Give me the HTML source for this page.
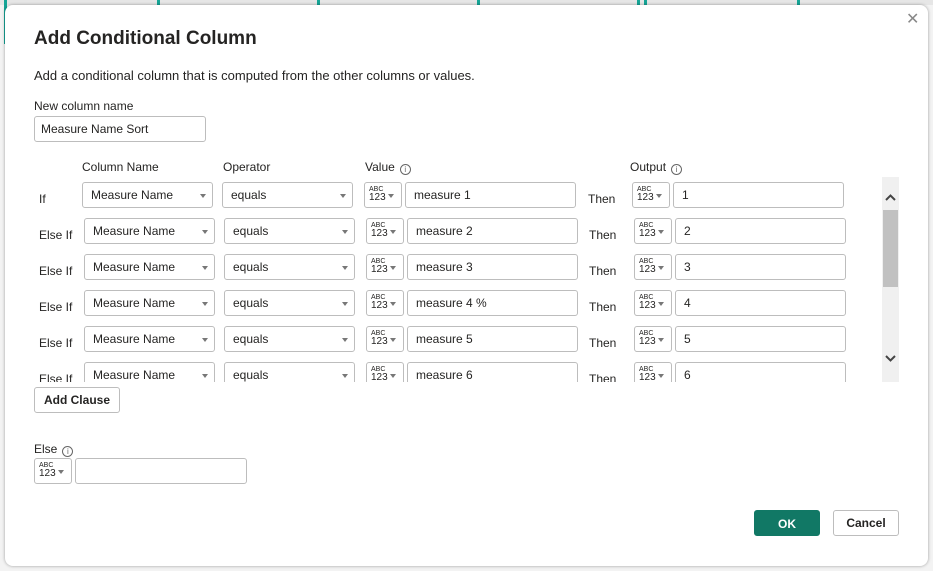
<!DOCTYPE html>
<html><head><style>
*{box-sizing:border-box}
body{margin:0;width:933px;height:571px;overflow:hidden;background:#f3f3f3;font-family:"Segoe UI","Liberation Sans",sans-serif;color:#252423;position:relative}
.a{position:absolute}
.dlg{left:5px;top:5px;width:923px;height:561px;background:#fff;border-radius:8px;box-shadow:0 0 3px rgba(0,0,0,.35)}
.box{position:absolute;border:1px solid #bdbdbd;border-radius:3px;background:#fff;font-size:12px;padding-left:8px;line-height:25px;height:26px}
.dd::after{content:"";position:absolute;right:6px;top:11px;border:3px solid transparent;border-top:4px solid #777}
.ty{position:absolute;border:1px solid #bdbdbd;border-radius:3px;width:38px;height:26px;background:#fff}
.ty b{position:absolute;left:4px;top:3px;font-weight:normal;font-size:7px;line-height:7px}
.ty i{position:absolute;left:4px;top:10px;font-style:normal;font-size:10px;line-height:10px}
.ty::after{content:"";position:absolute;right:7px;top:11px;border:3px solid transparent;border-top:4px solid #777}
.lbl{position:absolute;font-size:12px}
.info{display:inline-block;width:11px;height:11px;border:1px solid #666;border-radius:50%;font-size:8px;line-height:9px;text-align:center;margin-left:5px;vertical-align:-1px;color:#666}
.btn{position:absolute;border:1px solid #bdbdbd;border-radius:3px;background:#fff;font-size:12px;font-weight:bold;text-align:center}
</style></head><body>
<div class="a" style="left:0;top:0;width:933px;height:5px;background:#e6e6e6"></div>
<div class="a" style="left:4px;top:0;width:3px;height:44px;background:#16a596"></div>
<div class="a" style="left:157px;top:0;width:3px;height:6px;background:#16a596"></div>
<div class="a" style="left:317px;top:0;width:3px;height:6px;background:#16a596"></div>
<div class="a" style="left:477px;top:0;width:3px;height:6px;background:#16a596"></div>
<div class="a" style="left:637px;top:0;width:3px;height:6px;background:#16a596"></div>
<div class="a" style="left:644px;top:0;width:3px;height:6px;background:#16a596"></div>
<div class="a" style="left:797px;top:0;width:3px;height:6px;background:#16a596"></div>
<div class="a dlg">
</div>
<div class="a" style="left:34px;top:28px;font-size:19px;font-weight:bold;color:#252423">Add Conditional Column</div>
<div class="a" style="left:906px;top:9px;font-size:16px;color:#888">✕</div>
<div class="lbl" style="left:34px;top:68px;font-size:13px">Add a conditional column that is computed from the other columns or values.</div>
<div class="lbl" style="left:34px;top:99px">New column name</div>
<div class="box" style="left:34px;top:116px;width:172px;height:26px;padding-left:6px">Measure Name Sort</div>
<div class="lbl" style="left:82px;top:160px">Column Name</div>
<div class="lbl" style="left:223px;top:160px">Operator</div>
<div class="lbl" style="left:365px;top:160px">Value<span class="info">i</span></div>
<div class="lbl" style="left:630px;top:160px">Output<span class="info">i</span></div>
<div class="a" style="left:20px;top:176px;width:860px;height:206px;overflow:hidden">
<div class="lbl" style="left:19px;top:16px">If</div>
<div class="box dd" style="left:62px;top:6px;width:131px">Measure Name</div>
<div class="box dd" style="left:202px;top:6px;width:131px">equals</div>
<div class="ty" style="left:344px;top:6px"><b>ABC</b><i>123</i></div>
<div class="box" style="left:385px;top:6px;width:171px">measure 1</div>
<div class="lbl" style="left:568px;top:16px">Then</div>
<div class="ty" style="left:612px;top:6px"><b>ABC</b><i>123</i></div>
<div class="box" style="left:653px;top:6px;width:171px">1</div>

<div class="lbl" style="left:19px;top:52px">Else If</div>
<div class="box dd" style="left:64px;top:42px;width:131px">Measure Name</div>
<div class="box dd" style="left:204px;top:42px;width:131px">equals</div>
<div class="ty" style="left:346px;top:42px"><b>ABC</b><i>123</i></div>
<div class="box" style="left:387px;top:42px;width:171px">measure 2</div>
<div class="lbl" style="left:569px;top:52px">Then</div>
<div class="ty" style="left:614px;top:42px"><b>ABC</b><i>123</i></div>
<div class="box" style="left:655px;top:42px;width:171px">2</div>

<div class="lbl" style="left:19px;top:88px">Else If</div>
<div class="box dd" style="left:64px;top:78px;width:131px">Measure Name</div>
<div class="box dd" style="left:204px;top:78px;width:131px">equals</div>
<div class="ty" style="left:346px;top:78px"><b>ABC</b><i>123</i></div>
<div class="box" style="left:387px;top:78px;width:171px">measure 3</div>
<div class="lbl" style="left:569px;top:88px">Then</div>
<div class="ty" style="left:614px;top:78px"><b>ABC</b><i>123</i></div>
<div class="box" style="left:655px;top:78px;width:171px">3</div>

<div class="lbl" style="left:19px;top:124px">Else If</div>
<div class="box dd" style="left:64px;top:114px;width:131px">Measure Name</div>
<div class="box dd" style="left:204px;top:114px;width:131px">equals</div>
<div class="ty" style="left:346px;top:114px"><b>ABC</b><i>123</i></div>
<div class="box" style="left:387px;top:114px;width:171px">measure 4 %</div>
<div class="lbl" style="left:569px;top:124px">Then</div>
<div class="ty" style="left:614px;top:114px"><b>ABC</b><i>123</i></div>
<div class="box" style="left:655px;top:114px;width:171px">4</div>

<div class="lbl" style="left:19px;top:160px">Else If</div>
<div class="box dd" style="left:64px;top:150px;width:131px">Measure Name</div>
<div class="box dd" style="left:204px;top:150px;width:131px">equals</div>
<div class="ty" style="left:346px;top:150px"><b>ABC</b><i>123</i></div>
<div class="box" style="left:387px;top:150px;width:171px">measure 5</div>
<div class="lbl" style="left:569px;top:160px">Then</div>
<div class="ty" style="left:614px;top:150px"><b>ABC</b><i>123</i></div>
<div class="box" style="left:655px;top:150px;width:171px">5</div>

<div class="lbl" style="left:19px;top:196px">Else If</div>
<div class="box dd" style="left:64px;top:186px;width:131px">Measure Name</div>
<div class="box dd" style="left:204px;top:186px;width:131px">equals</div>
<div class="ty" style="left:346px;top:186px"><b>ABC</b><i>123</i></div>
<div class="box" style="left:387px;top:186px;width:171px">measure 6</div>
<div class="lbl" style="left:569px;top:196px">Then</div>
<div class="ty" style="left:614px;top:186px"><b>ABC</b><i>123</i></div>
<div class="box" style="left:655px;top:186px;width:171px">6</div>
</div>
<div class="a" style="left:882px;top:177px;width:17px;height:205px;background:#f0f0f0"></div>
<div class="a" style="left:883px;top:210px;width:15px;height:77px;background:#c1c1c1"></div>
<svg class="a" style="left:884px;top:192px" width="13" height="10"><path d="M2 8L6.5 3.5L11 8" stroke="#444" stroke-width="2" fill="none"/></svg>
<svg class="a" style="left:884px;top:354px" width="13" height="10"><path d="M2 2L6.5 6.5L11 2" stroke="#444" stroke-width="2" fill="none"/></svg>
<div class="btn" style="left:34px;top:387px;width:86px;height:26px;line-height:24px">Add Clause</div>
<div class="lbl" style="left:34px;top:442px">Else<span class="info">i</span></div>
<div class="ty" style="left:34px;top:458px"><b>ABC</b><i>123</i></div>
<div class="box" style="left:75px;top:458px;width:172px"></div>
<div class="btn" style="left:754px;top:510px;width:66px;height:26px;line-height:26px;background:#117865;border-color:#117865;color:#fff">OK</div>
<div class="btn" style="left:833px;top:510px;width:66px;height:26px;line-height:24px;font-weight:600">Cancel</div>
</body></html>
